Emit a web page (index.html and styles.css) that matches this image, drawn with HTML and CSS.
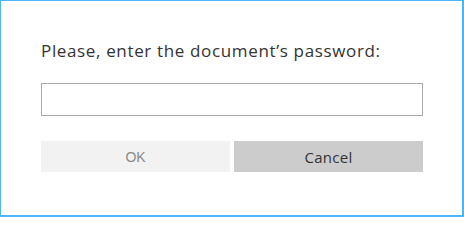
FILE: index.html
```html
<!DOCTYPE html>
<html>
<head>
<meta charset="utf-8">
<link rel="stylesheet" href="styles.css">
</head>
<body>
<div class="frame">
  <div class="dialog">
    <label class="prompt" for="pw">Please, enter the document’s password:</label>
    <input class="field" id="pw" type="password">
    <div class="buttons">
      <button class="btn btn-ok" disabled>OK</button>
      <button class="btn btn-cancel">Cancel</button>
    </div>
  </div>
</div>
</body>
</html>
```
FILE: styles.css
```css
html, body {
  margin: 0;
  padding: 0;
  background: #ffffff;
}
.frame {
  box-sizing: border-box;
  width: 464px;
  height: 217px;
  border-style: solid;
  border-color: #4db6f6;
  border-width: 1px 2px 2px 1px;
  background: #ffffff;
}
.dialog {
  display: flex;
  flex-direction: column;
  padding: 40px 39px 0 40px;
  font-family: "Open Sans", "Liberation Sans", sans-serif;
  color: #333333;
}
.prompt {
  display: block;
  font-size: 17px;
  line-height: 20px;
  height: 20px;
  letter-spacing: 0.65px;
}
.field {
  box-sizing: border-box;
  margin-top: 22px;
  width: 382px;
  height: 33px;
  border: 1px solid #aaaaaa;
  border-radius: 0;
  padding: 0 6px;
  outline: none;
  background: #ffffff;
}
.buttons {
  display: flex;
  gap: 4px;
  margin-top: 25px;
  width: 382px;
}
.btn {
  flex: 1;
  height: 31px;
  border: none;
  border-radius: 0;
  padding: 0;
  margin: 0;
}
.btn-ok {
  background: #f2f2f2;
  color: #8a8a8a;
  font-family: "Liberation Sans", Arial, sans-serif;
  font-size: 14px;
}
.btn-cancel {
  background: #cccccc;
  color: #333333;
  font-family: "Open Sans", "Liberation Sans", sans-serif;
  font-size: 15px;
  letter-spacing: 0.3px;
}
```
